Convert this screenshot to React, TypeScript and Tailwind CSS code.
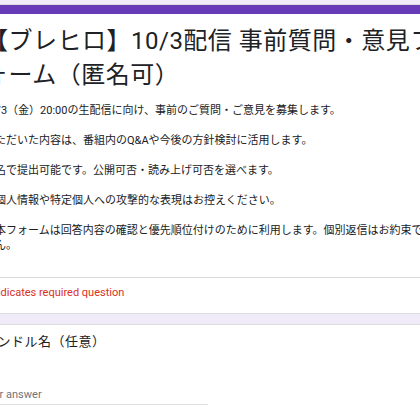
const FONT = "font-['Roboto','Noto_Sans_CJK_JP',sans-serif]";

const FORM_TITLE = "【ブレヒロ】10/3配信 事前質問・意見フォーム（匿名可）";

const DESCRIPTION = [
  "10/3（金）20:00の生配信に向け、事前のご質問・ご意見を募集します。",
  "いただいた内容は、番組内のQ&Aや今後の方針検討に活用します。",
  "匿名で提出可能です。公開可否・読み上げ可否を選べます。",
  "※個人情報や特定個人への攻撃的な表現はお控えください。",
  "※本フォームは回答内容の確認と優先順位付けのために利用します。個別返信はお約束できません。",
];

function HeaderCard() {
  return (
    <div className="overflow-hidden rounded-lg border border-[#dadce0] bg-white">
      {/* theme colour strip on top of the first card */}
      <div className="h-[9px] bg-[#673ab7]" />
      <div className="px-6 pb-[24px] pt-[10px]">
        <h1 className="text-[24px] font-normal leading-[34px] tracking-[0.5px] text-[#202124]">
          {FORM_TITLE}
        </h1>
        <div className="mt-[11px] flex flex-col gap-[15px] text-[11px] leading-[15px] text-[#202124]">
          {DESCRIPTION.map((p) => (
            <p key={p}>{p}</p>
          ))}
        </div>
      </div>
      <div className="border-t border-[#dadce0] px-6 pb-[13px] pt-[7px] text-[11px] leading-[15px] text-[#d93025]">
        * Indicates required question
      </div>
    </div>
  );
}

function ShortAnswerCard({ title }: { title: string }) {
  return (
    <div className="rounded-lg border border-[#dadce0] bg-white px-6 pb-6 pt-[8px]">
      <div className="text-[13px] leading-[18px] tracking-[0.5px] text-[#202124]">{title}</div>
      <div className="-ml-[3px] mt-[36px] w-[227px] border-b border-[#e0e0e0] pb-[1px] text-[11px] leading-[16px] text-[#70757a]">
        Your answer
      </div>
    </div>
  );
}

export default function App() {
  return (
    <div className={`h-[420px] w-[420px] overflow-hidden bg-[#f0ebf8] ${FONT}`}>
      <div className="-ml-[41px] flex w-[514px] flex-col gap-[10px] pt-[4px]">
        <HeaderCard />
        <ShortAnswerCard title="ハンドル名（任意）" />
      </div>
    </div>
  );
}
